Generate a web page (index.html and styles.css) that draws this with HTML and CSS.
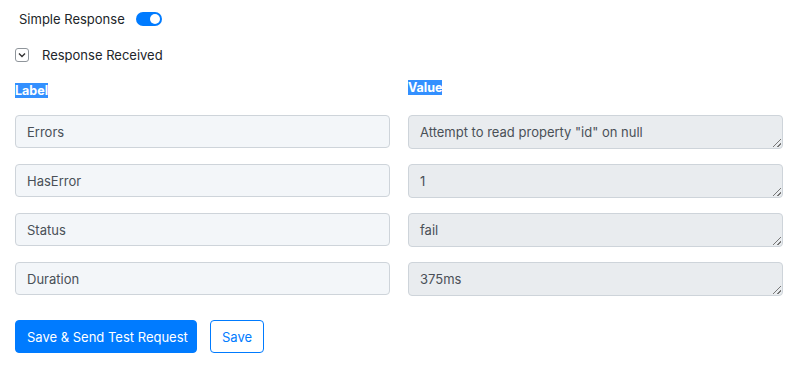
FILE: index.html
```html
<!DOCTYPE html>
<html lang="en">
<head>
    <meta charset="UTF-8">
    <title>Test Request</title>
    <link rel="stylesheet" href="styles.css">
</head>
<body>
    <div class="panel">
        <div class="switch-row">
            <span>Simple Response</span>
            <span class="switch"><span class="knob"></span></span>
        </div>
        <div class="received-row">
            <span class="check">
                <svg width="8" height="6" viewBox="0 0 8 6"><path d="M1 1.5 L4 4.5 L7 1.5" fill="none" stroke="#333" stroke-width="1.4"/></svg>
            </span>
            <span>Response Received</span>
        </div>

        <div class="grid">
            <div class="head head-label"><span class="sel">Label</span></div>
            <div class="head head-value"><span class="sel">Value</span></div>

            <div class="field">Errors</div>
            <div class="area">Attempt to read property "id" on null<span class="grip"></span></div>

            <div class="field">HasError</div>
            <div class="area">1<span class="grip"></span></div>

            <div class="field">Status</div>
            <div class="area">fail<span class="grip"></span></div>

            <div class="field">Duration</div>
            <div class="area">375ms<span class="grip"></span></div>
        </div>

        <div class="actions">
            <button class="btn btn-primary">Save &amp; Send Test Request</button>
            <button class="btn btn-outline">Save</button>
        </div>
    </div>
</body>
</html>
```

FILE: styles.css
```css
body {
    margin: 0;
    font-family: Inter, "Noto Sans", sans-serif;
    font-size: 13px;
    color: #212529;
    background: #fff;
}

.panel {
    padding: 10px 16px 0 15px;
}

.switch-row {
    display: flex;
    align-items: center;
    gap: 11px;
    height: 18px;
    padding-left: 4px;
}

.switch {
    position: relative;
    width: 26px;
    height: 14px;
    border-radius: 7px;
    background: #007bff;
}

.switch .knob {
    position: absolute;
    top: 2px;
    right: 2px;
    width: 10px;
    height: 10px;
    border-radius: 50%;
    background: #fff;
}

.received-row {
    display: flex;
    align-items: center;
    gap: 13px;
    margin-top: 18px;
    height: 18px;
}

.check {
    width: 12px;
    height: 12px;
    border: 1px solid #8f959b;
    border-radius: 3px;
    display: flex;
    align-items: center;
    justify-content: center;
}

.grid {
    display: grid;
    grid-template-columns: 1fr 1fr;
    grid-template-rows: 17px;
    grid-auto-rows: 34px;
    column-gap: 18px;
    row-gap: 15px;
    margin-top: 19px;
}

.grid .head {
    font-size: 12.5px;
    font-weight: 700;
    line-height: 16px;
    height: 16px;
    align-self: start;
}

.head-value {
    margin-top: -3px;
}

.sel {
    background: #3390ff;
    color: #fff;
}

.field,
.area {
    position: relative;
    box-sizing: border-box;
    height: 33px;
    padding: 0 11px;
    border: 1px solid #ced4da;
    border-radius: 4px;
    display: flex;
    align-items: center;
    color: #495057;
    font-size: 13px;
    align-self: start;
}

.field {
    background: #f3f6f9;
}

.area {
    height: 34px;
    background: #e9ecef;
}

.grip {
    position: absolute;
    right: 1px;
    bottom: 1px;
    width: 8px;
    height: 8px;
    background: linear-gradient(135deg, transparent 45%, #777 45%, #777 55%, transparent 55%, transparent 72%, #777 72%, #777 82%, transparent 82%);
}

.actions {
    display: flex;
    gap: 13px;
    margin-top: 24px;
}

.btn {
    height: 33px;
    border-radius: 4px;
    font-family: Inter, "Noto Sans", sans-serif;
    font-size: 13px;
    padding: 0 11px;
    white-space: nowrap;
    cursor: pointer;
}

.btn-primary {
    background: #007bff;
    border: 1px solid #007bff;
    color: #fff;
    width: 182px;
}

.btn-outline {
    background: #fff;
    border: 1px solid #007bff;
    color: #007bff;
    width: 54px;
}
```
